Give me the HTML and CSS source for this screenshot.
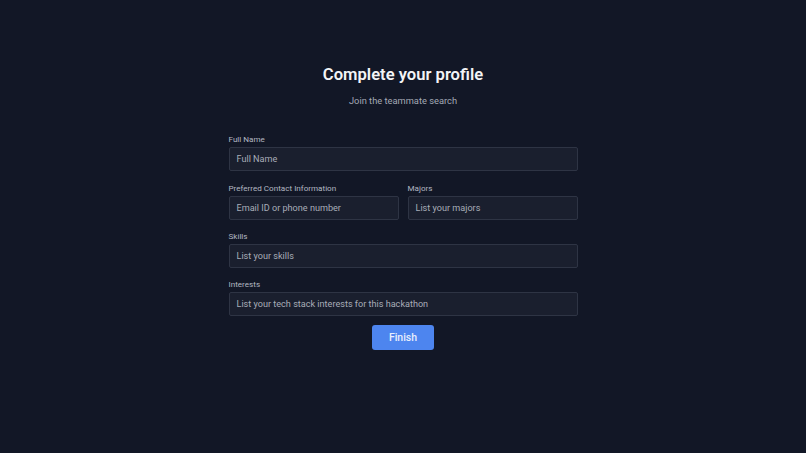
FILE: index.html
```html
<!DOCTYPE html>
<html lang="en">
<head>
<meta charset="utf-8">
<title>Complete your profile</title>
<link rel="stylesheet" href="styles.css">
</head>
<body>
<main class="page">
  <form class="card">
    <h1 class="title">Complete your profile</h1>
    <p class="subtitle">Join the teammate search</p>
    <div class="field first">
      <label class="label">Full Name</label>
      <div class="input">Full Name</div>
    </div>
    <div class="row">
      <div class="field">
        <label class="label">Preferred Contact Information</label>
        <div class="input">Email ID or phone number</div>
      </div>
      <div class="field">
        <label class="label">Majors</label>
        <div class="input">List your majors</div>
      </div>
    </div>
    <div class="field">
      <label class="label">Skills</label>
      <div class="input">List your skills</div>
    </div>
    <div class="field">
      <label class="label">Interests</label>
      <div class="input">List your tech stack interests for this hackathon</div>
    </div>
    <div class="actions">
      <button type="button" class="btn">Finish</button>
    </div>
  </form>
</main>
</body>
</html>
```
FILE: styles.css
```css
* { box-sizing: border-box; }
html, body { margin: 0; padding: 0; }
body {
  background: #121726;
  font-family: Roboto, "Noto Sans", sans-serif;
  color: #e5e7eb;
  width: 806px;
  height: 453px;
  overflow: hidden;
}
.page {
  display: flex;
  justify-content: center;
  padding-top: 64px;
}
.card {
  width: 349px;
  display: flex;
  flex-direction: column;
}
.title {
  margin: 0;
  text-align: center;
  font-size: 16.6px;
  font-weight: 600;
  color: #f3f4f6;
  line-height: 22px;
}
.subtitle {
  margin: 8px 0 0;
  text-align: center;
  font-size: 9.3px;
  color: #a3a9b5;
  line-height: 14px;
}
.row {
  display: flex;
  gap: 9px;
  margin-top: 12px;
}
.row .field { margin-top: 0; }
.field {
  display: flex;
  flex-direction: column;
  margin-top: 11px;
  flex: 1;
}
.field.first { margin-top: 26px; }
.label {
  font-size: 8.1px;
  color: #b3b8c2;
  line-height: 10px;
  margin-bottom: 3px;
}
.input {
  height: 24px;
  border: 1px solid #2e3444;
  background: #1a1f2e;
  border-radius: 2px;
  padding: 0 7px;
  font-size: 9.1px;
  color: #a8adb8;
  display: flex;
  align-items: center;
}
.actions {
  display: flex;
  justify-content: center;
  margin-top: 9px;
}
.btn {
  width: 62px;
  height: 25px;
  border: none;
  border-radius: 3px;
  background: #4d85ef;
  color: #e8eefc;
  font-family: Roboto, "Noto Sans", sans-serif;
  font-size: 10.5px;
  font-weight: 500;
}
```
